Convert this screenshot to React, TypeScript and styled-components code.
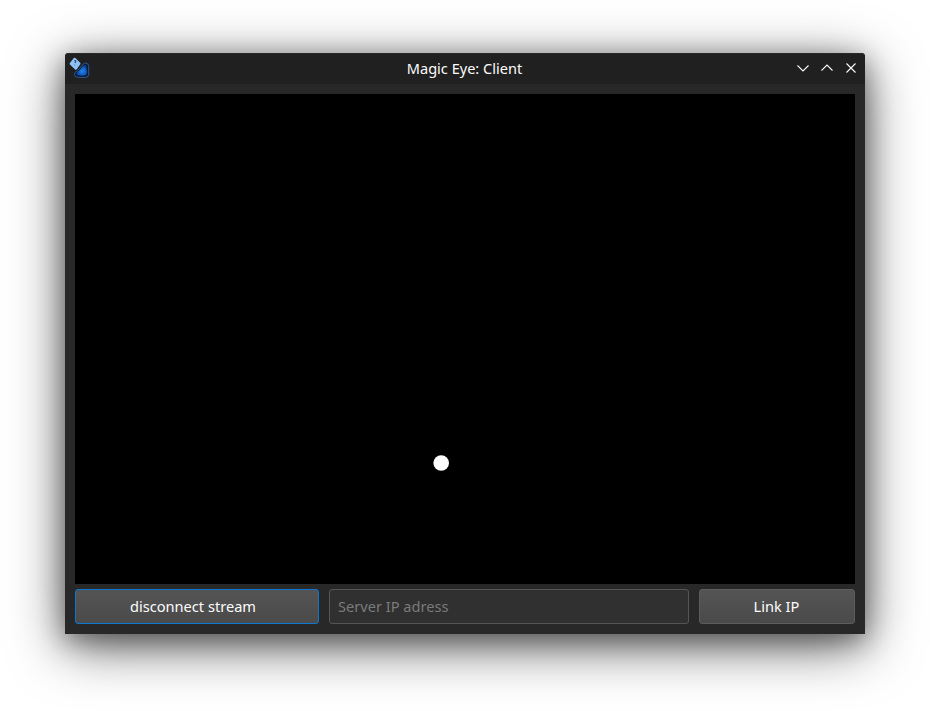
import React from "react";
import styled, { createGlobalStyle } from "styled-components";

const GlobalStyle = createGlobalStyle`
  * { box-sizing: border-box; }
  html, body { margin: 0; background: #fff; }
  body { font-family: "Noto Sans", sans-serif; overflow: hidden; }
`;

const Desktop = styled.main`
  height: 711px;
  padding: 53px 65px 77px;
  overflow: hidden;
`;

const Window = styled.section`
  width: 800px;
  height: 581px;
  display: flex;
  flex-direction: column;
  background: #282828;
  border-radius: 4px 4px 0 0;
  box-shadow: 0 12px 54px rgba(0, 0, 0, 0.62), 0 6px 26px rgba(0, 0, 0, 0.36);
`;

const TitleBar = styled.header`
  height: 31px;
  display: grid;
  grid-template-columns: 80px 1fr 80px;
  align-items: center;
  padding: 0 4px;
  background: #202020;
  border-radius: 4px 4px 0 0;
  box-shadow: inset 0 1px 0 #292929;
`;

const Title = styled.h1`
  margin: 0;
  padding: 0 1px 1px 0;
  text-align: center;
  font-size: 14.55px;
  font-weight: 400;
  line-height: 20px;
  color: #fcfcfc;
`;

const AppIcon = styled.svg`
  width: 22px;
  height: 22px;
  margin-top: -1px;
`;

const WindowControls = styled.div`
  display: flex;
  justify-content: flex-end;
  gap: 6px;
  padding-right: 1px;
  margin-top: -1px;
`;

const ControlButton = styled.button`
  width: 18px;
  height: 18px;
  padding: 0;
  border: 0;
  background: none;
  svg { display: block; fill: none; stroke: #fcfcfc; stroke-width: 1.1; }
`;

const Content = styled.div`
  flex: 1;
  display: flex;
  flex-direction: column;
  gap: 5px;
  padding: 10px;
`;

const VideoView = styled.div`
  position: relative;
  height: 490px;
  background: #000;
`;

const Marker = styled.svg`
  position: absolute;
  left: 358px;
  top: 361px;
  width: 17px;
  height: 17px;
  fill: #fff;
`;

const Controls = styled.form`
  display: grid;
  grid-template-columns: 244px 360px 156px;
  gap: 10px;
  height: 35px;
`;

const PushButton = styled.button<{ $focused?: boolean; $shift?: string }>`
  padding: 0 ${(p) => p.$shift ?? "1px"} 2px 0;
  border: 1px solid ${(p) => (p.$focused ? "#0a78d0" : "#5c5c5c")};
  border-radius: 3px;
  background: linear-gradient(#545454, #4a4a4a);
  color: #fcfcfc;
  font: 400 14.6px/20px "Noto Sans", sans-serif;
`;

const AddressField = styled.input`
  min-width: 0;
  padding: 0 8px 2px;
  border: 1px solid #555;
  border-radius: 3px;
  background: #303030;
  color: #fcfcfc;
  font: 400 14.6px/20px "Noto Sans", sans-serif;
  &::placeholder { color: #7a7a7a; opacity: 1; }
`;

const EyeIcon = () => (
  <AppIcon viewBox="0 0 22 22" aria-hidden="true">
    <defs>
      <radialGradient id="eye-blue" cx="55%" cy="60%" r="60%">
        <stop offset="0" stopColor="#2384ee" />
        <stop offset="0.55" stopColor="#1160c4" />
        <stop offset="1" stopColor="#07336f" />
      </radialGradient>
    </defs>
    <path d="M15.6 6.2H17Q19.7 6.6 19.7 9.2V17.5Q19.7 20.3 16.8 20.3H8.8Q5.4 20.3 5.5 17.4Q5.6 15.6 7.6 14Q11.4 11 14 7.4Q14.7 6.4 15.6 6.2Z" fill="#0a1a33" stroke="#2f629f" strokeWidth="0.9" />
    <path d="M15.3 7.5Q17.4 7 17.5 9.5V12.5Q18.7 14.9 17.7 17Q17 18.6 14.5 18.6H9.5Q6.1 18.3 7.8 15.5Q12.4 11.7 15.3 7.5Z" fill="url(#eye-blue)" />
    <path d="M6.4 1L11.2 5.7Q11.9 6.4 11.3 7.2L7.8 12.3Q7 13.2 6.1 12.4L.9 7.5Q.2 6.7.9 5.9L4.8 1.1Q5.7.3 6.4 1Z" fill="#91c2f6" />
    <path d="M5.3 3.7Q7.2 3.3 6.8 4.7L5.9 6M5.6 7.7V8.3" fill="none" stroke="#304e70" strokeWidth="1.2" />
  </AppIcon>
);

const controls = [
  { label: "Minimize", path: "M3.5 6.5L9 12L14.5 6.5" },
  { label: "Maximize", path: "M3.5 11.5L9 6L14.5 11.5" },
  { label: "Close", path: "M4.5 4.5L13.5 13.5M13.5 4.5L4.5 13.5" },
];

export default function App() {
  return (
    <>
      <GlobalStyle />
      <Desktop>
        <Window>
          <TitleBar>
            <EyeIcon />
            <Title>Magic Eye: Client</Title>
            <WindowControls>
              {controls.map(({ label, path }) => (
                <ControlButton key={label} aria-label={label}>
                  <svg viewBox="0 0 18 18" width="18" height="18"><path d={path} /></svg>
                </ControlButton>
              ))}
            </WindowControls>
          </TitleBar>
          <Content>
            <VideoView>
              <Marker viewBox="0 0 17 17"><circle cx="8.2" cy="8" r="7.8" /></Marker>
            </VideoView>
            <Controls>
              <PushButton type="button" $focused $shift="8px">disconnect stream</PushButton>
              <AddressField placeholder="Server IP adress" />
              <PushButton type="button">Link IP</PushButton>
            </Controls>
          </Content>
        </Window>
      </Desktop>
    </>
  );
}
